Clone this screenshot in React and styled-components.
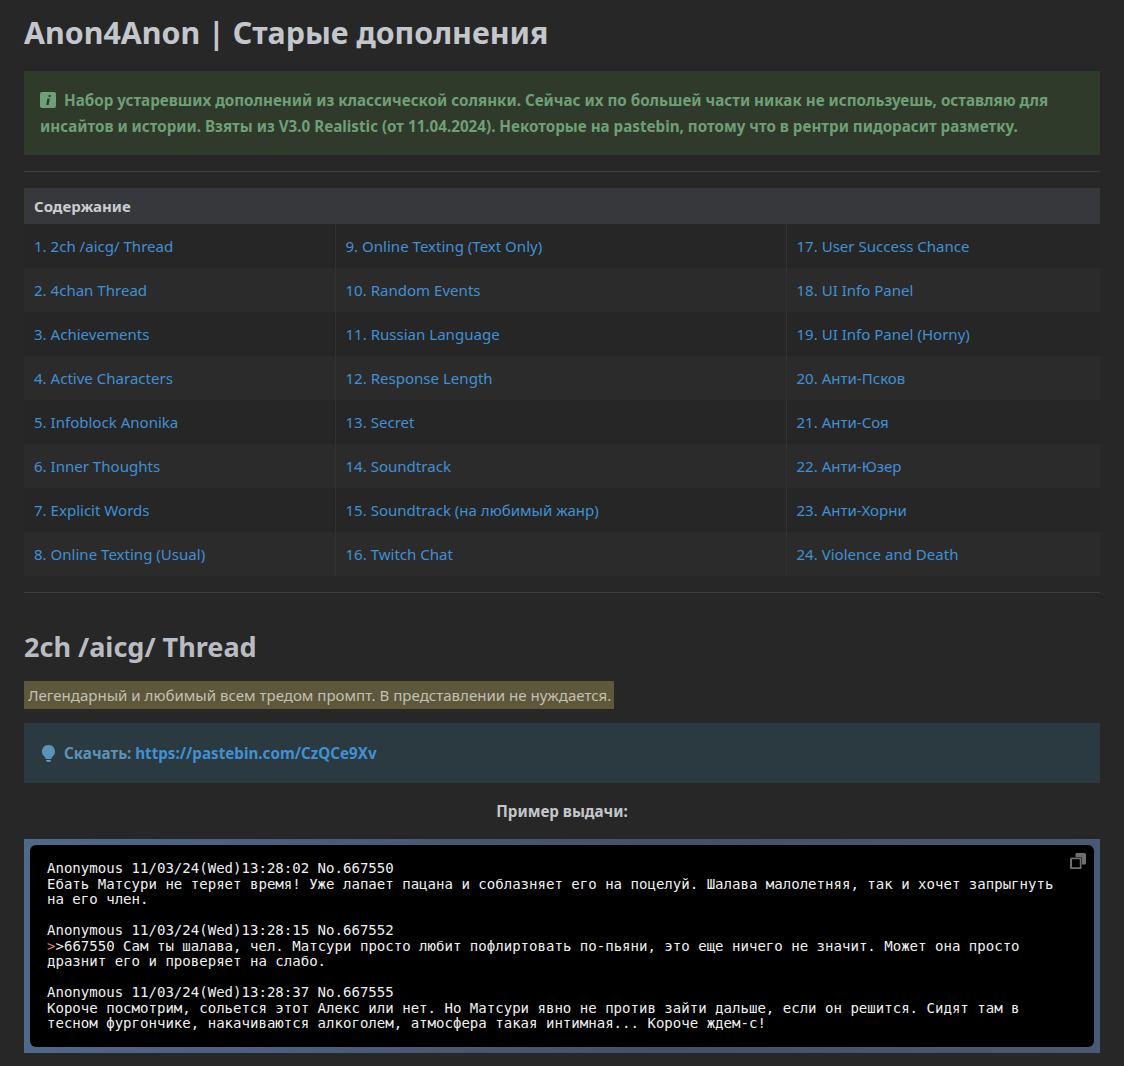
import React from 'react';
import styled, { createGlobalStyle } from 'styled-components';

const GlobalStyle = createGlobalStyle`
  html, body {
    margin: 0;
    background: #272727;
    overflow: hidden;
  }
  body {
    height: 1066px;
    font-family: "Noto Sans", "Open Sans", sans-serif;
    font-size: 16px;
    color: #c9ccd0;
  }
`;

const Page = styled.div`
  padding: 0 24px;
`;

const Title = styled.h1`
  margin: 0;
  padding-top: 14px;
  font-size: 30.35px;
  line-height: 38px;
  font-weight: 700;
  color: #c3c7cc;
`;

const Note = styled.div`
  margin-top: ${p => p.$top};
  padding: ${p => p.$padding};
  font-weight: 700;
  font-size: 15.2px;
  line-height: 26px;
  color: ${p => p.$color};
  background: ${p => p.$bg};
`;

const Divider = styled.hr`
  margin: ${p => p.$margin};
  border: 0;
  border-top: 1px solid #3c3e40;
`;

const Table = styled.table`
  width: 100%;
  border-collapse: collapse;
  table-layout: fixed;
  font-size: 15.05px;
`;

const HeadCell = styled.th`
  height: 36px;
  padding: 0 10px;
  text-align: left;
  font-weight: 700;
  font-size: 15px;
  background: #37383b;
  color: #c9ccd0;
`;

const Row = styled.tr`
  background: ${p => (p.$odd ? '#2b2b2b' : '#262626')};
`;

const Cell = styled.td`
  height: 44px;
  padding: 0 10px;
  border-left: ${p => (p.$first ? '0' : '1px solid #313233')};
  color: #4190d4;
`;

const Heading = styled.h2`
  margin: 34px 0 0;
  font-size: 27px;
  line-height: 40px;
  font-weight: 700;
  color: #b9bdc2;
`;

const Marked = styled.div`
  margin-top: 14px;
  display: inline-block;
  padding: 0 3px 0 4px;
  font-size: 15.05px;
  line-height: 28px;
  color: #c2c0b0;
  background: #5d573c;
`;

const TipLink = styled.span`
  color: #4190d4;
`;

const Caption = styled.div`
  margin-top: 16px;
  text-align: center;
  font-weight: 700;
  font-size: 15.2px;
  line-height: 24px;
  color: #c3c7cc;
`;

const CodeFrame = styled.div`
  margin-top: 16px;
  padding: 6px;
  background: linear-gradient(90deg, #4d6a8a, #444f69 60%, #4a5a74);
`;

const CodeBox = styled.pre`
  position: relative;
  margin: 0;
  padding: 16px 17px 15px;
  background: #000;
  border-radius: 6px;
  font-family: "DejaVu Sans Mono", monospace;
  font-size: 14.05px;
  line-height: 15.5px;
  color: #f0f0f0;
  white-space: pre-wrap;
`;

const Quote = styled.span`
  color: #d9825f;
`;

const CopyIcon = styled.svg`
  position: absolute;
  top: 8px;
  right: 8px;
  width: 16px;
  height: 16px;
  fill: #6f6f6f;
`;

const InfoIcon = styled.svg`
  width: 16px;
  height: 16px;
  vertical-align: -2px;
  margin-right: 8px;
`;

const BulbIcon = styled.svg`
  width: 13px;
  height: 17px;
  vertical-align: -3px;
  margin: 0 9px 0 2px;
  fill: #5b93b8;
`;

const toc = [
  ['1. 2ch /aicg/ Thread', '9. Online Texting (Text Only)', '17. User Success Chance'],
  ['2. 4chan Thread', '10. Random Events', '18. UI Info Panel'],
  ['3. Achievements', '11. Russian Language', '19. UI Info Panel (Horny)'],
  ['4. Active Characters', '12. Response Length', '20. Анти-Псков'],
  ['5. Infoblock Anonika', '13. Secret', '21. Анти-Соя'],
  ['6. Inner Thoughts', '14. Soundtrack', '22. Анти-Юзер'],
  ['7. Explicit Words', '15. Soundtrack (на любимый жанр)', '23. Анти-Хорни'],
  ['8. Online Texting (Usual)', '16. Twitch Chat', '24. Violence and Death'],
];

export default function App() {
  return (
    <Page>
      <GlobalStyle />
      <Title>Anon4Anon | Старые дополнения</Title>
      <Note $top="19px" $padding="16px" $bg="#2f3a2a" $color="#6f9f78">
        <InfoIcon viewBox="0 0 16 16">
          <rect width="16" height="16" rx="2" fill="#6f9f78" />
          <path d="M8.6 3h2v2h-2zM7.4 6.5h2.4L8.6 13H6.2z" fill="#2f3a2a" />
        </InfoIcon>
        Набор устаревших дополнений из классической солянки. Сейчас их по большей части никак не используешь, оставляю для инсайтов и истории. Взяты из V3.0 Realistic (от 11.04.2024). Некоторые на pastebin, потому что в рентри пидорасит разметку.
      </Note>
      <Divider $margin="16px 0" />
      <Table>
        <colgroup>
          <col style={{ width: 311 }} />
          <col style={{ width: 451 }} />
          <col />
        </colgroup>
        <thead>
          <tr>
            <HeadCell colSpan={3}>Содержание</HeadCell>
          </tr>
        </thead>
        <tbody>
          {toc.map((row, i) => (
            <Row key={row[0]} $odd={i % 2 === 1}>
              {row.map((item, j) => (
                <Cell key={item} $first={j === 0}>{item}</Cell>
              ))}
            </Row>
          ))}
        </tbody>
      </Table>
      <Divider $margin="16px 0 0" />
      <Heading>2ch /aicg/ Thread</Heading>
      <Marked>Легендарный и любимый всем тредом промпт. В представлении не нуждается.</Marked>
      <Note $top="14px" $padding="17px 16px" $bg="#2b3940" $color="#5b93b8">
        <BulbIcon viewBox="0 0 13 17">
          <path d="M6.5 0A6.5 6.500 0 0 0 2.600 11.700c.7.6 1 1.400 1.100 2.300h5.600c.1-.9.4-1.700 1.100-2.300A6.500 6.500 0 0 0 6.500 0zM4 15h5v.8l-1 1.200H5l-1-1.200z" />
        </BulbIcon>
        Скачать: <TipLink>https://pastebin.com/CzQCe9Xv</TipLink>
      </Note>
      <Caption>Пример выдачи:</Caption>
      <CodeFrame>
        <CodeBox>
          <CopyIcon viewBox="0 0 16 16">
            <path d="M6.500 0H14a2 2 0 0 1 2 2v8.500a1 1 0 0 1-1 1h-3V5.500A1.500 1.500 0 0 0 10.500 4H5.500V1a1 1 0 0 1 1-1z" />
            <path d="M1.500 4.500h9a1 1 0 0 1 1 1V15a1 1 0 0 1-1 1H1a1 1 0 0 1-1-1V6a1.500 1.500 0 0 1 1.500-1.500zM2 6.200v8.100h7.800V6.200z" fillRule="evenodd" />
          </CopyIcon>
          {`Anonymous 11/03/24(Wed)13:28:02 No.667550
Ебать Матсури не теряет время! Уже лапает пацана и соблазняет его на поцелуй. Шалава малолетняя, так и хочет запрыгнуть на его член.

Anonymous 11/03/24(Wed)13:28:15 No.667552
`}<Quote>{'>'}</Quote>{`>667550 Сам ты шалава, чел. Матсури просто любит пофлиртовать по-пьяни, это еще ничего не значит. Может она просто дразнит его и проверяет на слабо.

Anonymous 11/03/24(Wed)13:28:37 No.667555
Короче посмотрим, сольется этот Алекс или нет. Но Матсури явно не против зайти дальше, если он решится. Сидят там в тесном фургончике, накачиваются алкоголем, атмосфера такая интимная... Короче ждем-с!`}
        </CodeBox>
      </CodeFrame>
    </Page>
  );
}
